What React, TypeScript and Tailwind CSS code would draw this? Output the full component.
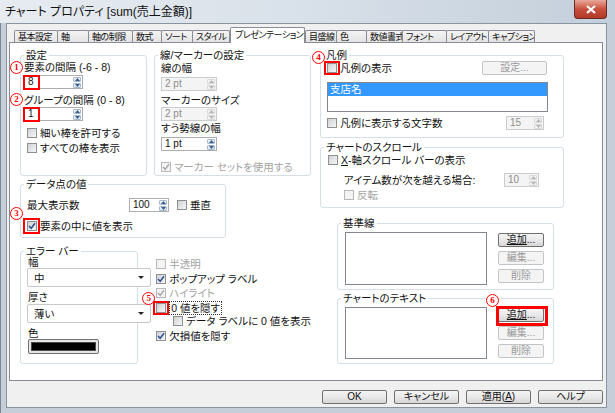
import React from 'react'

type Kids = { children?: React.ReactNode }

const tabs: [string, string][] = [
  ['基本設定', 'w-[44px]'],
  ['軸', 'w-[32px]'],
  ['軸の制限', 'w-[45px]'],
  ['数式', 'w-[30px]'],
  ['ソート', 'w-[32px]'],
  ['スタイル', 'w-[38px]'],
  ['プレゼンテーション', 'w-[75px]'],
  ['目盛線', 'w-[32px]'],
  ['色', 'w-[31px]'],
  ['数値書式', 'w-[37px]'],
  ['フォント', 'w-[45px]'],
  ['レイアウト', 'w-[43px]'],
  ['キャプション', 'w-[47px]'],
]

function Group({ label, className, children }: Kids & { label: string; className: string }) {
  return (
    <fieldset className={`relative min-w-0 rounded-[3px] border border-[#d5dfe5] ${className}`}>
      <legend className="ml-[3px] h-[12px] px-[2px] leading-[12px]">{label}</legend>
      {children}
    </fieldset>
  )
}

function Mark({ n, className }: { n: string; className: string }) {
  return (
    <span
      className={`absolute z-10 flex h-[13px] w-[13px] items-center justify-center rounded-full border-[1.5px] border-[#ff0000] bg-white font-['Liberation_Serif',serif] text-[9px] font-bold leading-none text-[#ff0000] ${className}`}
    >
      {n}
    </span>
  )
}

function RedBox({ className }: { className: string }) {
  return <span className={`pointer-events-none absolute z-10 border-2 border-[#ff0000] ${className}`} />
}

function Check({ checked, disabled }: { checked?: boolean; disabled?: boolean }) {
  return (
    <span
      className={`flex h-[10px] w-[10px] shrink-0 items-center justify-center border ${
        disabled ? 'border-[#b9b9b9] bg-[#f4f4f4]' : 'border-[#8e8f8f] bg-gradient-to-br from-[#cfd2d6] to-[#f6f6f6]'
      }`}
    >
      {checked && (
        <svg width="8" height="8" viewBox="0 0 8 8">
          <path d="M1 4 L3.2 6.3 L7 1.3" fill="none" stroke={disabled ? '#a8a8a8' : '#2d4f92'} strokeWidth="1.5" />
        </svg>
      )}
    </span>
  )
}

function CheckRow({
  label,
  checked,
  disabled,
  className = '',
  children,
}: Kids & { label: React.ReactNode; checked?: boolean; disabled?: boolean; className?: string }) {
  return (
    <div className={`relative flex items-center gap-[3px] ${disabled ? 'text-[#a3a3a3]' : ''} ${className}`}>
      <span className="relative">
        <Check checked={checked} disabled={disabled} />
        {children}
      </span>
      <span className="whitespace-nowrap leading-[12px]">{label}</span>
    </div>
  )
}

function Arrow({ up, disabled }: { up?: boolean; disabled?: boolean }) {
  return (
    <svg width="5" height="3" viewBox="0 0 5 3">
      <path d={up ? 'M0 3 L2.5 0 L5 3 Z' : 'M0 0 L2.5 3 L5 0 Z'} fill={disabled ? '#b8b8b8' : '#3d5f8c'} />
    </svg>
  )
}

function Spin({ value, className, disabled, children }: Kids & { value: string; className: string; disabled?: boolean }) {
  const half = `flex flex-1 items-center justify-center rounded-[1px] border ${
    disabled ? 'border-[#d8d8d8] bg-[#f2f2f2]' : 'border-[#a7b9cd] bg-gradient-to-b from-[#f1f6fb] to-[#d7e4f1]'
  }`
  return (
    <div
      className={`relative flex h-[14px] border ${
        disabled ? 'border-[#c9ccd0] bg-[#f4f4f4] text-[#8d8d8d]' : 'border-[#abadb3] bg-white'
      } ${className}`}
    >
      <div className="flex-1 pl-[3px] font-['Liberation_Sans',sans-serif] text-[10px] leading-[12px]">{value}</div>
      <div className="flex w-[10px] flex-col gap-px p-px">
        <div className={half}>
          <Arrow up disabled={disabled} />
        </div>
        <div className={half}>
          <Arrow disabled={disabled} />
        </div>
      </div>
      {children}
    </div>
  )
}

function Btn({ children, disabled, className = '' }: Kids & { disabled?: boolean; className?: string }) {
  return (
    <div
      className={`relative flex h-[14px] w-[46px] items-center justify-center rounded-[2px] border text-[10px] leading-none ${
        disabled
          ? 'border-[#c2c5c8] bg-[#f4f4f4] text-[#9a9a9a]'
          : 'border-[#707070] bg-gradient-to-b from-[#f4f4f4] via-[#e9e9e9] to-[#d6d6d6]'
      } ${className}`}
    >
      {children}
    </div>
  )
}

function Select({ value }: { value: string }) {
  return (
    <div className="flex h-[19px] w-[124px] items-center justify-between rounded-[2px] border border-[#c8c8c8] bg-white pl-[6px] pr-[6px]">
      <span className="leading-[12px]">{value}</span>
      <svg width="6" height="3" viewBox="0 0 6 3">
        <path d="M0 0 L3 3 L6 0 Z" fill="#222" />
      </svg>
    </div>
  )
}

function ListButtons({ marked }: { marked?: boolean }) {
  return (
    <div className="ml-[11px] mt-[1px] flex flex-col gap-[4px]">
      <Btn>
        <span className="underline">追加</span>...
        {marked && (
          <>
            <RedBox className="-left-[3px] -top-[3px] h-[20px] w-[52px] border-[3px]" />
            <Mark n="6" className="-left-[13px] -top-[15px]" />
          </>
        )}
      </Btn>
      <Btn disabled>編集...</Btn>
      <Btn disabled>削除</Btn>
    </div>
  )
}

export default function App() {
  return (
    <div className="flex h-[413px] w-[615px] flex-col overflow-hidden bg-[#c6cfd9] font-['Liberation_Sans','Noto_Sans_CJK_JP',sans-serif] text-[10.5px] text-[#111] [font-feature-settings:'palt']">
      {/* title bar */}
      <div className="relative flex h-[23px] shrink-0 items-center bg-gradient-to-r from-[#e7ecf1] via-[#d8e0e9] to-[#c3cfdb] pl-[5px]">
        <span className="text-[12px] leading-[14px] text-[#111]">チャート プロパティ [sum(売上金額)]</span>
        <div className="ml-auto mr-[8px] flex h-[19px] w-[33px] items-center justify-center self-start rounded-b-[4px] border border-t-0 border-[#6b2a22] bg-gradient-to-b from-[#e8a89a] via-[#c9503e] to-[#b33a28]">
          <svg width="10" height="9" viewBox="0 0 10 9">
            <path d="M1 1 L9 8 M9 1 L1 8" stroke="#fff" strokeWidth="2.2" />
          </svg>
        </div>
      </div>

      <div className="flex flex-1 border-l border-[#7d8690] pb-[5px] pl-[5px] pr-[8px]">
        <div className="flex flex-1 flex-col border border-[#8994a1] bg-[#f0f0f0]">
          {/* tabs */}
          <div className="ml-[7px] mt-[3px] flex h-[16px] items-end text-[9px] tracking-[-0.5px]">
            {tabs.map(([t, w], i) =>
              i === 6 ? (
                <div
                  key={t}
                  className={`${w} relative z-10 h-[16px] overflow-hidden whitespace-nowrap rounded-t-[2px] border border-b-0 border-[#898c95] bg-white pl-[4px] pt-[1px] leading-[13px]`}
                >
                  {t}
                </div>
              ) : (
                <div
                  key={t}
                  className={`${w} h-[13px] overflow-hidden whitespace-nowrap rounded-t-[2px] border border-b-0 border-[#898c95] bg-gradient-to-b from-[#f4f4f4] to-[#e2e2e2] pl-[3px] leading-[12px] ${
                    i > 0 && i !== 7 ? '-ml-px' : ''
                  }`}
                >
                  {t}
                </div>
              ),
            )}
          </div>

          {/* panel */}
          <div className="-mt-px ml-[2px] mr-[3px] flex h-[339px] border border-[#898c95] bg-white pl-[10px] pt-[6px]">
            {/* left region */}
            <div className="flex w-[291px] flex-col">
              <div className="flex gap-[7px]">
                <Group label="設定" className="h-[127px] w-[127px]">
                  <div className="flex flex-col pl-[3px]">
                    <div className="relative h-[12px] whitespace-nowrap leading-[12px]">
                      <Mark n="1" className="-left-[14px] top-0" />
                      要素の間隔 (-6 - 8)
                    </div>
                    <Spin value="8" className="mt-[2px] w-[59px]">
                      <RedBox className="-left-[2px] -top-px h-[15px] w-[17px]" />
                    </Spin>
                    <div className="relative mt-[5px] h-[12px] whitespace-nowrap leading-[12px]">
                      <Mark n="2" className="-left-[14px] -top-[1px]" />
                      グループの間隔 (0 - 8)
                    </div>
                    <Spin value="1" className="mt-px w-[59px]">
                      <RedBox className="-left-[2px] -top-px h-[15px] w-[17px]" />
                    </Spin>
                    <CheckRow label="細い棒を許可する" className="ml-[3px] mt-[6px] h-[12px]" />
                    <CheckRow label="すべての棒を表示" className="ml-[3px] mt-[3px] h-[12px]" />
                  </div>
                </Group>
                <Group label="線/マーカーの設定" className="h-[127px] w-[157px]">
                  <div className="flex flex-col pl-[6px]">
                    <div className="mt-px h-[12px] leading-[12px]">線の幅</div>
                    <Spin value="2 pt" disabled className="mt-[3px] w-[56px]" />
                    <div className="mt-[3px] h-[12px] leading-[12px]">マーカーのサイズ</div>
                    <Spin value="2 pt" disabled className="mt-px w-[56px]" />
                    <div className="mt-px h-[12px] leading-[12px]">すう勢線の幅</div>
                    <Spin value="1 pt" className="mt-[3px] w-[56px]" />
                    <CheckRow label="マーカー セットを使用する" checked disabled className="mt-[10px] h-[12px]" />
                  </div>
                </Group>
              </div>

              <Group label="データ点の値" className="mt-[2px] h-[60px] w-[206px]">
                <div className="flex flex-col pl-[6px]">
                  <div className="mt-[8px] flex h-[14px] items-center">
                    <span className="w-[102px] leading-[12px]">最大表示数</span>
                    <Spin value="100" className="w-[40px]" />
                    <CheckRow label="垂直" className="ml-[8px]" />
                  </div>
                  <CheckRow label="要素の中に値を表示" checked className="mt-[8px] h-[12px]">
                    <RedBox className="-left-[4px] -top-[3px] h-[16px] w-[17px]" />
                    <Mark n="3" className="-left-[17px] -top-[14px]" />
                  </CheckRow>
                </div>
              </Group>

              <div className="mt-[7px] flex">
                <Group label="エラー バー" className="h-[119px] w-[141px]">
                  <div className="flex flex-col pl-[6px]">
                    <div className="h-[11px] pl-px leading-[11px]">幅</div>
                    <Select value="中" />
                    <div className="mt-[4px] h-[12px] pl-px leading-[12px]">厚さ</div>
                    <div className="mt-px">
                      <Select value="薄い" />
                    </div>
                    <div className="mt-[4px] h-[12px] pl-px leading-[12px]">色</div>
                    <div className="ml-px h-[15px] w-[71px] rounded-[2px] border border-[#707070] bg-[#e6e6e6] p-[2px]">
                      <div className="h-full w-full border border-[#4a4a4a] bg-black" />
                    </div>
                  </div>
                </Group>
                <div className="ml-[18px] flex flex-col pt-[12px]">
                  <CheckRow label="半透明" disabled className="h-[13px]" />
                  <CheckRow label="ポップアップ ラベル" checked className="mt-[2px] h-[13px]" />
                  <CheckRow label="ハイライト" checked disabled className="mt-px h-[13px]" />
                  <CheckRow
                    label={<span className="border border-dotted border-[#333] px-px">0 値を隠す</span>}
                    className="mt-[2px] h-[13px]"
                  >
                    <RedBox className="-left-[3px] -top-[2px] h-[14px] w-[16px]" />
                    <Mark n="5" className="-left-[14px] -top-[11px]" />
                  </CheckRow>
                  <CheckRow label="データ ラベルに 0 値を表示" className="ml-[17px] h-[13px]" />
                  <CheckRow label="欠損値を隠す" checked className="mt-[2px] h-[13px]" />
                </div>
              </div>
            </div>

            {/* right region */}
            <div className="ml-[9px] flex w-[244px] flex-col">
              <Group label="凡例" className="h-[89px] w-[244px]">
                <div className="flex flex-col pl-[6px]">
                  <div className="flex h-[14px] w-[220px] items-center justify-between">
                    <CheckRow label="凡例の表示">
                      <RedBox className="-left-[3px] -top-[2px] h-[14px] w-[16px]" />
                      <Mark n="4" className="-left-[15px] -top-[12px]" />
                    </CheckRow>
                    <Btn disabled className="w-[65px]">
                      設定...
                    </Btn>
                  </div>
                  <div className="mt-[7px] h-[30px] w-[221px] border border-[#828790] bg-white">
                    <div className="h-[13px] bg-[#3399ff] pl-[2px] leading-[13px] text-white">支店名</div>
                  </div>
                  <div className="mt-[4px] flex h-[14px] w-[217px] items-center justify-between">
                    <CheckRow label="凡例に表示する文字数" />
                    <Spin value="15" disabled className="w-[38px]" />
                  </div>
                </div>
              </Group>

              <Group label="チャートのスクロール" className="mt-[3px] h-[67px] w-[244px]">
                <div className="flex flex-col pl-[7px]">
                  <CheckRow label={<><span className="underline">X</span>-軸スクロール バーの表示</>} className="h-[13px]" />
                  <div className="mt-[7px] flex h-[14px] items-center pl-[16px]">
                    <span className="w-[160px] leading-[12px]">アイテム数が次を越える場合:</span>
                    <Spin value="10" disabled className="w-[35px]" />
                  </div>
                  <CheckRow label="反転" disabled className="ml-[16px] mt-[2px] h-[12px]" />
                </div>
              </Group>

              <Group label="基準線" className="ml-[17px] mt-[9px] h-[73px] w-[217px]">
                <div className="flex pl-[7px] pt-[3px]">
                  <div className="h-[53px] w-[142px] border border-[#828790] bg-white" />
                  <ListButtons />
                </div>
              </Group>

              <Group label="チャートのテキスト" className="ml-[17px] mt-[2px] h-[72px] w-[217px]">
                <div className="flex pl-[7px] pt-[3px]">
                  <div className="h-[52px] w-[142px] border border-[#828790] bg-white" />
                  <ListButtons marked />
                </div>
              </Group>
            </div>
          </div>

          {/* dialog buttons */}
          <div className="mr-[3px] mt-[9px] flex justify-end gap-[7px]">
            <Btn className="w-[65px] border-[#3c7fb1] from-[#f2f8fc] via-[#e6eef5] to-[#d3e0ec]">OK</Btn>
            <Btn className="w-[65px]">キャンセル</Btn>
            <Btn className="w-[65px]">
              適用(<span className="underline">A</span>)
            </Btn>
            <Btn className="w-[65px]">ヘルプ</Btn>
          </div>
        </div>
      </div>
    </div>
  )
}
